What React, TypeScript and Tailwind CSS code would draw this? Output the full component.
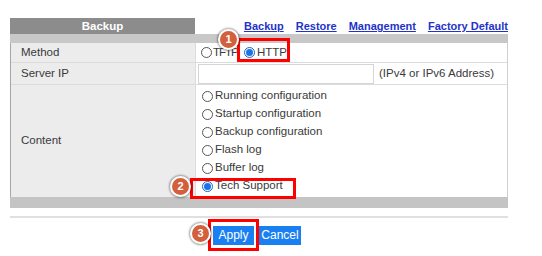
import { ReactNode } from 'react'

const font = { fontFamily: '"Liberation Sans", Arial, sans-serif' }

function Radio({ checked = false }: { checked?: boolean }) {
  return checked ? (
    <span className="inline-flex items-center justify-center w-[11px] h-[11px] rounded-full border border-[#1565c0] bg-white shrink-0">
      <span className="w-[7px] h-[7px] rounded-full bg-[#1a73e8]" />
    </span>
  ) : (
    <span className="inline-block w-[11px] h-[11px] rounded-full border border-[#555] bg-white shrink-0" />
  )
}

function Option({ label, checked }: { label: string; checked?: boolean }) {
  return (
    <div className="flex items-center gap-[2px] h-[18px]">
      <Radio checked={checked} />
      <span>{label}</span>
    </div>
  )
}

function Badge({ n, className }: { n: number; className: string }) {
  return (
    <div
      className={`absolute w-[21px] h-[21px] rounded-full bg-[#d2603c] border-2 border-white shadow-[0_0_2px_1px_rgba(0,0,0,0.35)] text-white text-[11px] font-bold flex items-center justify-center ${className}`}
    >
      {n}
    </div>
  )
}

function Row({ label, height, children }: { label: string; height: string; children: ReactNode }) {
  return (
    <div className={`grid grid-cols-[185px_1fr] border-b border-[#dcdcdc] ${height}`}>
      <div className="bg-[#ececec] flex items-center pl-[10px] border-r border-[#dcdcdc]">{label}</div>
      <div className="bg-white">{children}</div>
    </div>
  )
}

export default function App() {
  const links = ['Backup', 'Restore', 'Management', 'Factory Default']
  const contents = ['Running configuration', 'Startup configuration', 'Backup configuration', 'Flash log', 'Buffer log']

  return (
    <div className="relative w-[542px] h-[256px] bg-white text-[#3a3a3a] text-[11.5px] overflow-hidden" style={font}>
      <div className="pt-[18px] pl-[10px] w-[508px]">
        {/* Header */}
        <div className="flex h-[16px]">
          <div className="w-[185px] bg-[#8c8c8c] text-white font-bold text-[11.5px] leading-[16px] text-center">Backup</div>
          <div className="flex-1 flex justify-end items-end gap-[12px] pb-[1px]">
            {links.map((l) => (
              <a key={l} href="#" className="text-[#1f33c8] font-bold underline text-[11px] leading-[13px]">
                {l}
              </a>
            ))}
          </div>
        </div>
        <div className="h-[9px] bg-[#c8c8c8]" />

        {/* Table */}
        <div className="border-l border-[#a6a6a6] border-r border-r-[#d0d0d0]">
          <Row label="Method" height="h-[20px]">
            <div className="flex items-center h-full pl-[5px]">
              <div className="flex items-center gap-[1px] w-[43px]">
                <Radio />
                <span className="tracking-[-1px]">TFTP</span>
              </div>
              <div className="flex items-center gap-[2px]">
                <Radio checked />
                <span>HTTP</span>
              </div>
            </div>
          </Row>
          <Row label="Server IP" height="h-[22px]">
            <div className="flex items-center h-full pl-[2px] gap-[5px]">
              <div className="w-[176px] h-[20px] border border-[#d4d4d4] bg-white" />
              <span>(IPv4 or IPv6 Address)</span>
            </div>
          </Row>
          <div className="grid grid-cols-[185px_1fr] h-[112px]">
            <div className="bg-[#ececec] flex items-center pl-[10px] border-r border-[#dcdcdc]">Content</div>
            <div className="bg-white pl-[6px] pt-[2px]">
              {contents.map((c) => (
                <Option key={c} label={c} />
              ))}
              <Option label="Tech Support" checked />
            </div>
          </div>
        </div>
        <div className="h-[11px] bg-[#c4c4c4]" />
        <div className="h-[2px] bg-[#e0e0e0] mt-[8px]" />

        {/* Buttons */}
        <div className="flex justify-center gap-[5px] mt-[8px] pr-[4px]">
          <button className="w-[41px] h-[19px] bg-[#1a80f2] text-white text-[12px] leading-[19px]">Apply</button>
          <button className="w-[42px] h-[19px] bg-[#1a80f2] text-white text-[12px] leading-[19px]">Cancel</button>
        </div>
      </div>

      {/* Annotations */}
      <div className="absolute left-[237px] top-[38px] w-[53px] h-[24px] border-[3px] border-[#ff0000]" />
      <Badge n={1} className="left-[218px] top-[29px]" />
      <div className="absolute left-[190px] top-[178px] w-[106px] h-[21px] border-[3px] border-[#ff0000]" />
      <Badge n={2} className="left-[170px] top-[176px]" />
      <div className="absolute left-[208px] top-[219px] w-[51px] h-[32px] border-[3px] border-[#ff0000]" />
      <Badge n={3} className="left-[190px] top-[223px]" />
    </div>
  )
}
